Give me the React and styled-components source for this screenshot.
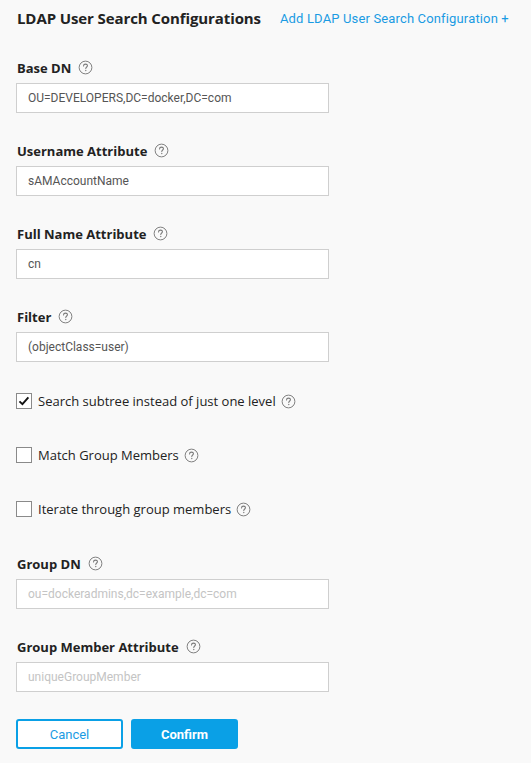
import React, { useState } from 'react';
import styled, { createGlobalStyle } from 'styled-components';

const GlobalStyle = createGlobalStyle`
  html, body {
    margin: 0;
    padding: 0;
    background: #f9f9f9;
  }
  * { box-sizing: border-box; }
`;

function HelpIcon() {
  return (
    <HelpSvg viewBox="0 0 16 16" width="15" height="15">
      <circle cx="8" cy="8" r="6.8" fill="none" stroke="#777" strokeWidth="1" />
      <path
        d="M5.9 6.3 C5.9 5.1 6.8 4.4 8 4.4 C9.2 4.4 10.1 5.1 10.1 6.2 C10.1 7.4 8.3 7.6 8.3 9.1"
        fill="none"
        stroke="#777"
        strokeWidth="1.1"
        strokeLinecap="round"
      />
      <circle cx="8.3" cy="11.2" r="0.7" fill="#777" />
    </HelpSvg>
  );
}

function TextField({ label, value, placeholder }) {
  return (
    <Field>
      <Label>
        {label}
        <HelpIcon />
      </Label>
      <Input defaultValue={value} placeholder={placeholder} />
    </Field>
  );
}

function CheckRow({ label, initial }) {
  const [checked, setChecked] = useState(initial);
  return (
    <CheckLine>
      <Box onClick={() => setChecked(!checked)}>
        {checked && (
          <svg viewBox="0 0 16 16" width="14" height="14">
            <path d="M2.8 8.4 L6.2 11.6 L13 3.8" fill="none" stroke="#111" strokeWidth="2.2" />
          </svg>
        )}
      </Box>
      <CheckText>{label}</CheckText>
      <HelpIcon />
    </CheckLine>
  );
}

export default function App() {
  return (
    <Page>
      <GlobalStyle />
      <Header>
        <Title>LDAP User Search Configurations</Title>
        <AddLink href="#">Add LDAP User Search Configuration +</AddLink>
      </Header>
      <Form>
        <TextField label="Base DN" value="OU=DEVELOPERS,DC=docker,DC=com" />
        <TextField label="Username Attribute" value="sAMAccountName" />
        <TextField label="Full Name Attribute" value="cn" />
        <TextField label="Filter" value="(objectClass=user)" />
        <Checks>
          <CheckRow label="Search subtree instead of just one level" initial={true} />
          <CheckRow label="Match Group Members" initial={false} />
          <CheckRow label="Iterate through group members" initial={false} />
        </Checks>
        <TextField label="Group DN" placeholder="ou=dockeradmins,dc=example,dc=com" />
        <TextField label="Group Member Attribute" placeholder="uniqueGroupMember" />
      </Form>
      <Actions>
        <Button>Cancel</Button>
        <Button primary>Confirm</Button>
      </Actions>
    </Page>
  );
}

const Page = styled.div`
  width: 531px;
  min-height: 763px;
  padding: 8px 16px 0 16px;
  background: #f9f9f9;
`;

const Header = styled.div`
  display: flex;
  align-items: center;
  gap: 19px;
  height: 20px;
  padding-left: 1px;
`;

const Title = styled.h2`
  margin: 0;
  font-family: "Open Sans", sans-serif;
  font-weight: 700;
  font-size: 15px;
  color: #222;
  letter-spacing: -0.1px;
`;

const AddLink = styled.a`
  font-family: "Roboto", "Liberation Sans", sans-serif;
  font-size: 13px;
  letter-spacing: 0.15px;
  color: #1a9be3;
  text-decoration: none;
`;

const Form = styled.div`
  display: flex;
  flex-direction: column;
  gap: 30px;
  padding-top: 32px;
`;

const Field = styled.div`
  display: flex;
  flex-direction: column;
  gap: 8px;
`;

const Label = styled.div`
  display: flex;
  align-items: center;
  gap: 7px;
  padding-left: 1px;
  height: 15px;
  font-family: "Open Sans", sans-serif;
  font-weight: 700;
  font-size: 13px;
  color: #222;
`;

const HelpSvg = styled.svg`
  flex: none;
`;

const Input = styled.input`
  width: 313px;
  height: 30px;
  padding: 0 11px;
  border: 1px solid #cfcfcf;
  border-radius: 0;
  background: #fff;
  font-family: "Roboto", "Liberation Sans", sans-serif;
  font-size: 12px;
  color: #555;
  outline: none;

  &::placeholder {
    color: #c4c4c4;
  }
`;

const Checks = styled.div`
  display: flex;
  flex-direction: column;
  gap: 38px;
  padding: 1px 0 9px;
`;

const CheckLine = styled.div`
  display: flex;
  align-items: center;
  height: 16px;
  font-family: "Open Sans", sans-serif;
  font-size: 13px;
  color: #222;
`;

const Box = styled.div`
  width: 16px;
  height: 16px;
  margin-right: 6px;
  border: 1px solid #8a8a8a;
  background: #fff;
  display: flex;
  align-items: center;
  justify-content: center;
  cursor: pointer;
`;

const CheckText = styled.span`
  margin-right: 5px;
`;

const Actions = styled.div`
  display: flex;
  gap: 8px;
  padding-top: 27px;
`;

const Button = styled.button`
  width: 107px;
  height: 30px;
  border-radius: 3px;
  border: 2px solid #0aa0e6;
  background: ${(p) => (p.primary ? '#0aa0e6' : '#fff')};
  color: ${(p) => (p.primary ? '#fff' : '#1a9be3')};
  font-family: "Roboto", "Liberation Sans", sans-serif;
  font-weight: ${(p) => (p.primary ? 700 : 400)};
  font-size: 13px;
  cursor: pointer;
`;
